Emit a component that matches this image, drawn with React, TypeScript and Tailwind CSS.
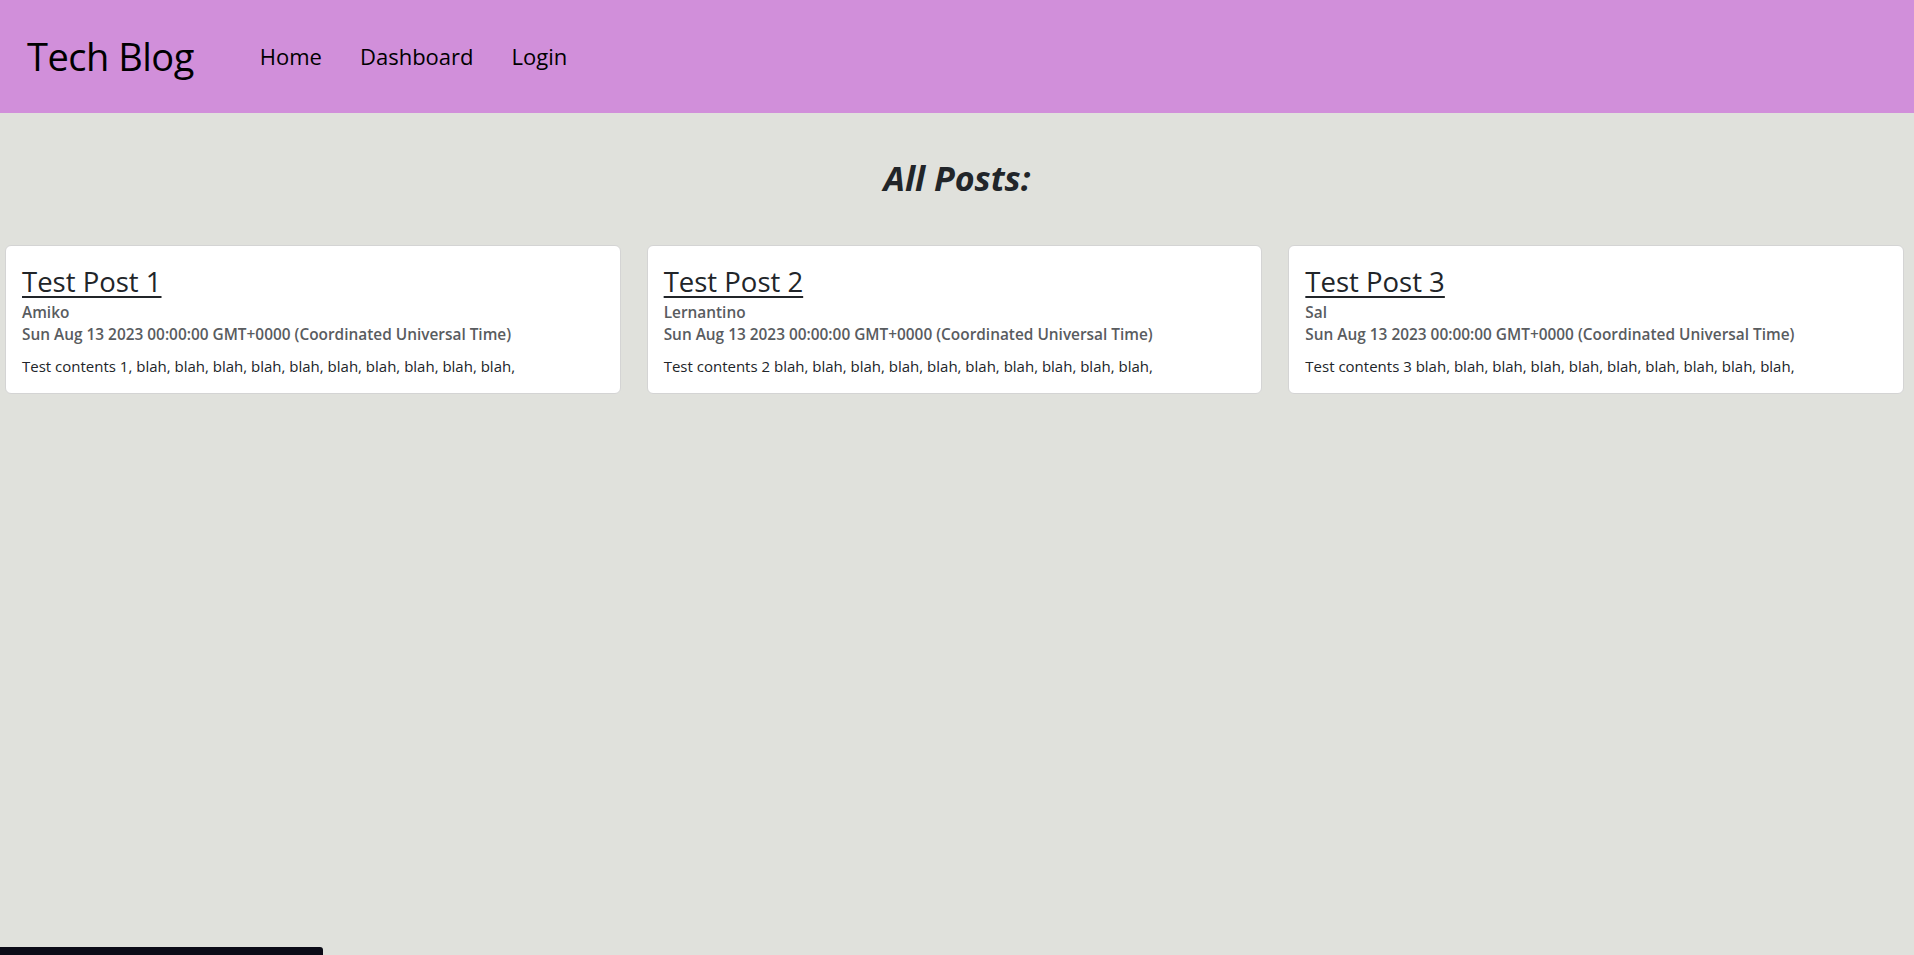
const posts = [
  { id: 1, title: "Test Post 1", author: "Amiko", body: "Test contents 1, blah, blah, blah, blah, blah, blah, blah, blah, blah, blah," },
  { id: 2, title: "Test Post 2", author: "Lernantino", body: "Test contents 2 blah, blah, blah, blah, blah, blah, blah, blah, blah, blah," },
  { id: 3, title: "Test Post 3", author: "Sal", body: "Test contents 3 blah, blah, blah, blah, blah, blah, blah, blah, blah, blah," },
];

const date = "Sun Aug 13 2023 00:00:00 GMT+0000 (Coordinated Universal Time)";

export default function App() {
  return (
    <div className="min-h-[955px] bg-[#e0e1dc] font-['Open_Sans',sans-serif] text-[#212529] relative">
      <header className="h-[113px] bg-[#d18fda] flex items-center px-[27px]">
        <a href="#" className="text-[38px] text-black tracking-[-0.5px]">Tech Blog</a>
        <nav className="flex items-center gap-[38px] ml-[66px] text-[22px] text-black">
          <a href="#">Home</a>
          <a href="#">Dashboard</a>
          <a href="#">Login</a>
        </nav>
      </header>

      <main>
        <h2 className="text-center italic font-bold text-[34px] leading-[38px] pt-[46px] pb-[48px]">All Posts:</h2>
        <div className="grid grid-cols-3 gap-[26px] pl-[5px] pr-[10px]">
          {posts.map((p) => (
            <div key={p.id} className="bg-white border border-[#d4d4d4] rounded-[6px] p-[16px]">
              <a href="#" className="block text-[27.5px] leading-[40px] underline underline-offset-[4px] decoration-[2px] w-fit">{p.title}</a>
              <div className="text-[15.4px] leading-[22px] font-semibold text-[#595c5f]">{p.author}</div>
              <div className="text-[15.4px] leading-[22px] font-semibold text-[#595c5f]">{date}</div>
              <p className="text-[15px] leading-[22px] mt-[9px]">{p.body}</p>
            </div>
          ))}
        </div>
      </main>

      <div className="absolute left-0 bottom-0 w-[323px] h-[8px] bg-[#0b0b17] rounded-tr-[3px]" />
    </div>
  );
}
